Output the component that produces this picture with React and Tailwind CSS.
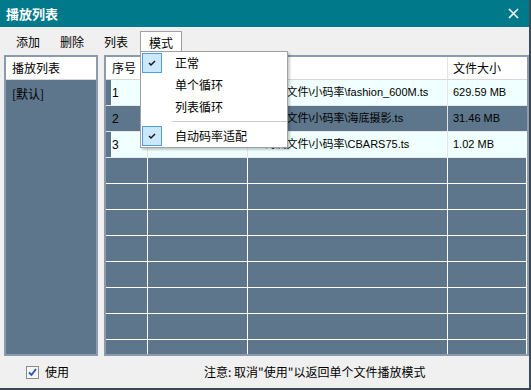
import React from "react";

const cjk = { fontFamily: '"Noto Sans CJK SC", "Liberation Sans", sans-serif' };
const lat = { fontFamily: '"Liberation Sans", "Noto Sans CJK SC", sans-serif' };

const rows = [
  { no: "1", name: "fashion_600M.ts", path: "E:\\码流文件\\小码率\\fashion_600M.ts", size: "629.59 MB" },
  { no: "2", name: "海底摄影.ts", path: "E:\\码流文件\\小码率\\海底摄影.ts", size: "31.46 MB", sel: true },
  { no: "3", name: "CBARS75.ts", path: "E:\\码流文件\\小码率\\CBARS75.ts", size: "1.02 MB" },
];

function Check() {
  return (
    <svg width="10" height="10" viewBox="0 0 10 10">
      <path d="M2 5 L4 7 L8 3" fill="none" stroke="#1a1a1a" strokeWidth="1.5" />
    </svg>
  );
}

export default function App() {
  return (
    <div className="w-[531px] h-[390px] bg-[#f0f0f0] flex flex-col overflow-hidden relative text-[12px] text-black border-r-2 border-b-2 border-[#3d4a55]" style={cjk}>
      {/* title bar */}
      <div className="h-[27px] bg-[#00798b] flex items-center justify-between px-[6px] shrink-0">
        <span className="text-white text-[13px] font-bold">播放列表</span>
        <svg width="11" height="11" viewBox="0 0 11 11" className="mr-[4px]">
          <path d="M1 1 L10 10 M10 1 L1 10" stroke="#fff" strokeWidth="1.6" />
        </svg>
      </div>

      {/* menu bar */}
      <div className="h-[25px] flex items-end shrink-0 pl-[6px]">
        <span className="px-[10px] h-[21px] leading-[21px]">添加</span>
        <span className="px-[10px] h-[21px] leading-[21px]">删除</span>
        <span className="px-[10px] h-[21px] leading-[21px]">列表</span>
        <span className="px-[8px] ml-[2px] h-[21px] leading-[21px] bg-white border border-b-0 border-[#a0a0a0]">模式</span>
      </div>

      {/* content */}
      <div className="flex mt-[3px] h-[301px] pl-[4px] gap-[6px] shrink-0">
        <div className="w-[94px] border-2 border-[#8b9bab] bg-[#5d768b] flex flex-col">
          <div className="h-[23px] bg-white border-b border-[#d8d8d8] flex items-center pl-[6px]">播放列表</div>
          <div className="pl-[6px] pt-[5px] text-black">[默认]</div>
        </div>

        <div className="w-[425px] border-2 border-[#8b9bab] bg-[#5d768b] flex flex-col overflow-hidden">
          <div className="h-[23px] bg-white border-b border-[#d8d8d8] flex shrink-0">
            <div className="w-[42px] pl-[6px] flex items-center border-r border-[#e4e4e4]">序号</div>
            <div className="w-[100px] pl-[6px] flex items-center border-r border-[#e4e4e4]">文件名</div>
            <div className="w-[200px] pl-[6px] flex items-center border-r border-[#e4e4e4]">路径</div>
            <div className="w-[79px] pl-[5px] flex items-center">文件大小</div>
          </div>
          {rows.map((r) => (
            <div key={r.no} className={`h-[26px] flex shrink-0 border-b border-[#e8e8e8] ${r.sel ? "bg-[#5d768b]" : "bg-[#f0ffff]"}`}>
              <div className="w-[42px] flex items-center border-r border-[#e4e4e4]">
                <div className="w-[5px] h-full bg-[#5d768b]" />
                <span className="pl-[1px]" style={lat}>{r.no}</span>
              </div>
              <div className="w-[100px] pl-[4px] flex items-center border-r border-[#e4e4e4] whitespace-nowrap overflow-hidden text-[11px]" style={lat}>{r.name}</div>
              <div className="w-[200px] pl-[3px] flex items-center border-r border-[#e4e4e4] whitespace-nowrap overflow-hidden text-[11px]" style={lat}>{r.path}</div>
              <div className="w-[79px] pl-[5px] flex items-center text-[11px]" style={lat}>{r.size}</div>
            </div>
          ))}
          {Array.from({ length: 8 }).map((_, i) => (
            <div key={i} className="h-[26px] flex shrink-0 border-b border-white">
              <div className="w-[42px] border-r border-white" />
              <div className="w-[100px] border-r border-white" />
              <div className="w-[200px] border-r border-white" />
              <div className="w-[79px] border-r border-white" />
            </div>
          ))}
        </div>
      </div>

      {/* bottom */}
      <div className="flex items-center h-[32px] pl-[26px]">
        <div className="w-[13px] h-[13px] border border-[#8a8a8a] bg-[#f4f6fa] flex items-center justify-center">
          <svg width="9" height="9" viewBox="0 0 9 9">
            <path d="M1 4.5 L3.5 7 L8 1" fill="none" stroke="#2a4fb0" strokeWidth="1.8" />
          </svg>
        </div>
        <span className="ml-[6px]">使用</span>
        <span className="ml-[135px]">注意: 取消"使用"以返回单个文件播放模式</span>
      </div>

      {/* dropdown menu */}
      <div className="absolute left-[140px] top-[51px] w-[148px] h-[97px] bg-white border border-[#a0a0a0] shadow-[2px_2px_2px_rgba(0,0,0,0.2)] flex flex-col">
        <div className="h-[22px] flex items-center">
          <div className="w-[20px] h-[20px] ml-[1px] bg-[#cce8ff] border border-[#4d9ee6] flex items-center justify-center"><Check /></div>
          <span className="ml-[13px]">正常</span>
        </div>
        <div className="h-[22px] flex items-center pl-[34px]">单个循环</div>
        <div className="h-[22px] flex items-center pl-[34px]">列表循环</div>
        <div className="h-[7px] flex items-center pl-[31px]"><div className="h-px w-full bg-[#c8c8c8]" /></div>
        <div className="h-[22px] flex items-center">
          <div className="w-[20px] h-[20px] ml-[1px] bg-[#cce8ff] border border-[#4d9ee6] flex items-center justify-center"><Check /></div>
          <span className="ml-[13px]">自动码率适配</span>
        </div>
      </div>
    </div>
  );
}
